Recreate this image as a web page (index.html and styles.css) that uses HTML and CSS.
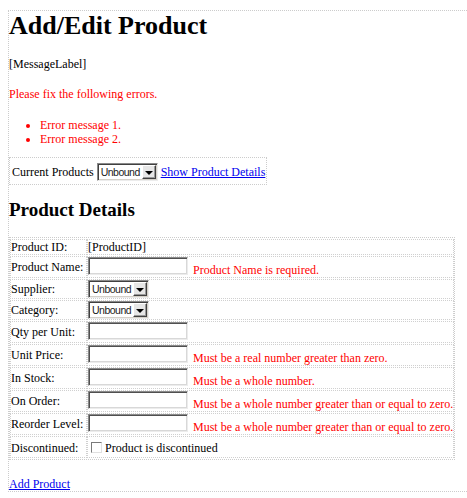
FILE: index.html
```html
<!DOCTYPE html>
<html>
<head>
<meta charset="utf-8">
<title>Add/Edit Product</title>
<link rel="stylesheet" href="styles.css">
</head>
<body>
<div class="page">
  <h1 class="title">Add/Edit Product</h1>
  <p class="msg">[MessageLabel]</p>
  <p class="summary">Please fix the following errors.</p>
  <ul class="errors">
    <li>Error message 1.</li>
    <li>Error message 2.</li>
  </ul>
  <div class="picker">Current Products <span class="sel"><span class="sel-text">Unbound</span><span class="sel-btn"><span class="tri"></span></span></span> <a href="#" class="link">Show Product Details</a></div>
  <h2 class="subtitle">Product Details</h2>
  <table class="details">
    <tr><td class="lbl">Product ID:</td><td class="val">[ProductID]</td></tr>
    <tr><td class="lbl">Product Name:</td><td class="val"><span class="tb"></span><span class="err">Product Name is required.</span></td></tr>
    <tr><td class="lbl">Supplier:</td><td class="val"><span class="sel"><span class="sel-text">Unbound</span><span class="sel-btn"><span class="tri"></span></span></span></td></tr>
    <tr><td class="lbl">Category:</td><td class="val"><span class="sel"><span class="sel-text">Unbound</span><span class="sel-btn"><span class="tri"></span></span></span></td></tr>
    <tr><td class="lbl">Qty per Unit:</td><td class="val"><span class="tb"></span></td></tr>
    <tr><td class="lbl">Unit Price:</td><td class="val"><span class="tb"></span><span class="err">Must be a real number greater than zero.</span></td></tr>
    <tr><td class="lbl">In Stock:</td><td class="val"><span class="tb"></span><span class="err">Must be a whole number.</span></td></tr>
    <tr><td class="lbl">On Order:</td><td class="val"><span class="tb"></span><span class="err">Must be a whole number greater than or equal to zero.</span></td></tr>
    <tr><td class="lbl">Reorder Level:</td><td class="val"><span class="tb"></span><span class="err">Must be a whole number greater than or equal to zero.</span></td></tr>
    <tr class="check-row"><td class="lbl">Discontinued:</td><td class="val"><span class="cb"></span>Product is discontinued</td></tr>
  </table>
  <p class="add"><a href="#" class="link">Add Product</a></p>
</div>
</body>
</html>
```

FILE: styles.css
```css
html, body {
  background: #ffffff;
}
body {
  margin: 10px 0 0 8px;
  font-family: "Liberation Serif", "Times New Roman", serif;
  font-size: 12px;
  line-height: 14px;
  color: #000000;
}
.page {
  border: 1px dotted #cccccc;
  border-right: none;
}
.title {
  font-size: 26px;
  line-height: 30px;
  font-weight: bold;
  margin: 0;
}
.msg {
  margin: 16px 0 0;
}
.summary {
  margin: 16px 0 0;
  color: #ff0000;
}
.errors {
  margin: 17px 0 0;
  padding-left: 31px;
  color: #ff0000;
  list-style: disc;
}
.picker {
  display: inline-block;
  margin-top: 11px;
  padding: 5px 1px 3px 2px;
  border: 1px dotted #cccccc;
  white-space: nowrap;
}
.link {
  color: #0000ee;
  text-decoration: underline;
}
.sel {
  display: inline-flex;
  align-items: stretch;
  box-sizing: border-box;
  width: 61px;
  height: 18px;
  padding: 1px;
  border: 1px solid;
  border-color: #8a8a8a #ececec #ececec #8a8a8a;
  box-shadow: inset 1px 1px #404040, inset -1px -1px #d4d0c8;
  background: #ffffff;
  font-family: "Liberation Sans", Arial, sans-serif;
  font-size: 10.5px;
  letter-spacing: -0.5px;
  line-height: 14px;
  color: #202020;
  vertical-align: baseline;
}
.sel-text {
  flex: 1;
  padding-left: 2px;
  overflow: hidden;
  white-space: nowrap;
}
.sel-btn {
  box-sizing: border-box;
  flex: none;
  width: 14px;
  height: 14px;
  display: flex;
  align-items: center;
  justify-content: center;
  background: #e6e6e6;
  border: 1px solid;
  border-color: #ffffff #404040 #404040 #ffffff;
  box-shadow: inset -1px -1px #9a9a9a;
}
.tri {
  width: 0;
  height: 0;
  border-top: 4px solid #000000;
  border-left: 4px solid transparent;
  border-right: 4px solid transparent;
  margin-top: 1px;
}
.subtitle {
  font-size: 19px;
  line-height: 22px;
  font-weight: bold;
  margin: 14px 0 0;
}
.details {
  margin-top: 16px;
  border: 1px dotted #cccccc;
  border-collapse: separate;
  border-spacing: 0 1px;
}
.details td {
  border: 1px dotted #d0d0d0;
  padding: 0;
  white-space: nowrap;
  vertical-align: middle;
}
.details td.lbl {
  width: 75px;
}
.check-row td {
  padding: 4px 0 2px;
}
.tb {
  display: inline-block;
  box-sizing: border-box;
  width: 100px;
  height: 18px;
  border: 1px solid;
  border-color: #8a8a8a #ececec #ececec #8a8a8a;
  box-shadow: inset 1px 1px #505050, inset -1px -1px #d8d8d8;
  background: #ffffff;
  vertical-align: -1px;
}
.err {
  color: #ff0000;
  margin-left: 5px;
}
.cb {
  display: inline-block;
  box-sizing: border-box;
  width: 11px;
  height: 11px;
  margin: 0 3px 0 3px;
  border: 1px solid;
  border-color: #7a7a7a #e0e0e0 #e0e0e0 #7a7a7a;
  background: #ffffff;
  vertical-align: -1px;
}
.add {
  margin: 17px 0 0;
}
```
